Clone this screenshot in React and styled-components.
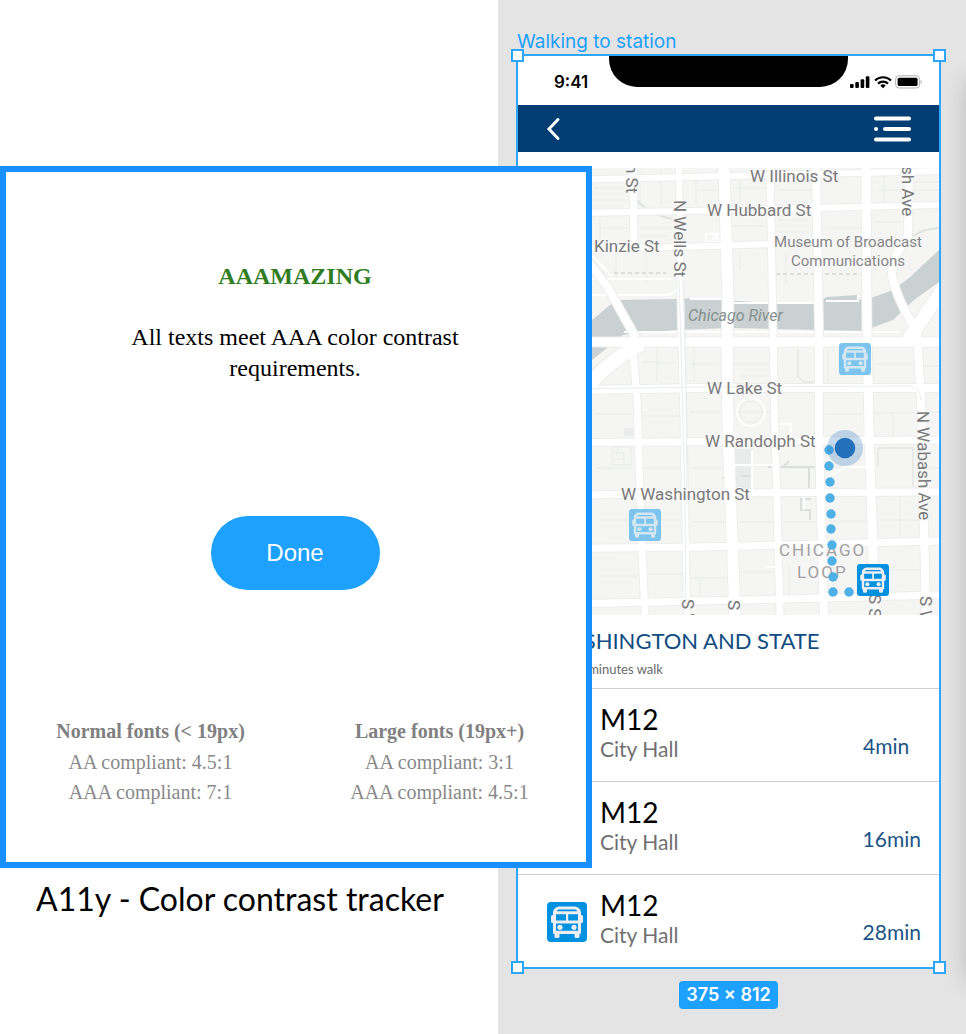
import React from "react";
import styled, { createGlobalStyle } from "styled-components";

const GlobalStyle = createGlobalStyle`
  *, *::before, *::after { box-sizing: border-box; }
  body { margin: 0; background: #fff; }
  h1, h2, h3, p, ul { margin: 0; padding: 0; }
  ul { list-style: none; }
`;

const serif = `"Liberation Serif", serif`;
const humanist = `Lato, sans-serif`;
const ui = `Inter, sans-serif`;

const Page = styled.div`
  display: grid;
  grid-template-columns: 498fr 468fr;
  min-height: 100vh;
`;

/* ---------- plugin side ---------- */

const PluginSide = styled.section`
  position: relative;
  z-index: 2;
  padding-top: 166px;
`;

const Panel = styled.div`
  display: flex;
  flex-direction: column;
  align-items: center;
  min-height: 702px;
  margin-right: -94px;
  padding: 89px 2px 55px 0;
  border: 6px solid #1890ff;
  background: #fff;
  font-family: ${serif};
`;

const Verdict = styled.h1`
  color: #2f7d1f;
  font-size: 24px;
  line-height: 30px;
`;

const Message = styled.p`
  max-width: 360px;
  margin-top: 31px;
  font-size: 24px;
  line-height: 31px;
  text-align: center;
  color: #000;
`;

const DoneButton = styled.button`
  margin-top: 132px;
  width: 169px;
  height: 74px;
  border: 0;
  border-radius: 37px;
  background: #1ea0fe;
  color: #fff;
  font: 24px "Liberation Sans", sans-serif;
`;

const Levels = styled.div`
  display: grid;
  grid-template-columns: 1fr 1fr;
  width: 100%;
  margin-top: auto;
`;

const Level = styled.div`
  color: #888;
  font-size: 20px;
  line-height: 30px;
  text-align: center;
`;

const LevelTitle = styled.h2`
  font-size: 20px;
  line-height: 31px;
  color: #808080;
`;

const Caption = styled.p`
  padding: 11px 0 0 36px;
  font-family: ${humanist};
  font-size: 32px;
  line-height: 40px;
  color: #000;
  white-space: nowrap;
`;

/* ---------- canvas side ---------- */

const Canvas = styled.section`
  position: relative;
  overflow: hidden;
  padding: 30px 25px 24px 18px;
  background: #e4e4e4;
`;

const NextFrameShadow = styled.div`
  position: absolute;
  left: 100%;
  top: 74px;
  bottom: 60px;
  width: 40px;
  box-shadow: 0 6px 24px rgba(0, 0, 0, 0.18);
`;

const FrameName = styled.h2`
  padding-left: 1px;
  font-family: ${ui};
  font-size: 19px;
  font-weight: 400;
  line-height: 24px;
  color: #1ea0fe;
`;

const Frame = styled.div`
  position: relative;
  border: 2px solid #2ea6fb;
  background: #fff;
`;

const Handle = styled.span`
  position: absolute;
  width: 13px;
  height: 13px;
  border: 2px solid #2ea6fb;
  background: #fff;
  ${(p) => p.$v}: -7px;
  ${(p) => p.$h}: -7px;
`;

const SizeBadge = styled.p`
  width: fit-content;
  margin: 12px auto 0;
  padding: 0 7px;
  border-radius: 4px;
  background: #1ea0fe;
  color: #fff;
  font-family: ${ui};
  font-size: 18px;
  font-weight: 600;
  line-height: 28px;
`;

const StatusBar = styled.div`
  position: relative;
  display: flex;
  align-items: center;
  justify-content: space-between;
  height: 49px;
  padding: 3px 17px 0 36px;
`;

const Notch = styled.div`
  position: absolute;
  top: 0;
  left: 50%;
  width: 239px;
  height: 31px;
  margin-left: -120px;
  border-radius: 0 0 28px 28px;
  background: #000;
`;

const Clock = styled.time`
  font-family: ${ui};
  font-size: 17px;
  font-weight: 600;
  line-height: 20px;
`;

const NavBar = styled.nav`
  display: flex;
  align-items: center;
  justify-content: space-between;
  height: 47px;
  padding: 0 27px;
  background: #023e73;
`;

const IconButton = styled.button`
  display: flex;
  padding: 0;
  border: 0;
  background: none;
`;

const MapArt = styled.svg`
  display: block;
  width: 100%;
  height: 447px;
  margin-top: 16px;
`;

const Stop = styled.header`
  height: 73px;
  padding: 11px 29px 0;
  font-family: ${humanist};
  white-space: nowrap;
`;

const StopName = styled.h3`
  font-size: 22px;
  font-weight: 400;
  line-height: 30px;
  color: #0f4c81;
`;

const StopWalk = styled.p`
  font-size: 13px;
  line-height: 26px;
  color: #6a6a6a;
`;

const Departure = styled.li`
  display: flex;
  align-items: center;
  height: 93px;
  padding: 2px 18px 0 29px;
  border-top: 1px solid #cfcfcf;
  font-family: ${humanist};
`;

const Route = styled.div`
  flex: 1;
  padding: 0 0 6px 13px;
`;

const RouteName = styled.p`
  font-size: 28px;
  line-height: 32px;
  color: #000;
`;

const RouteEnd = styled.p`
  font-size: 21px;
  line-height: 28px;
  color: #707070;
`;

const Wait = styled.p`
  align-self: flex-end;
  min-width: 58px;
  padding-bottom: 21px;
  font-size: 21px;
  line-height: 28px;
  color: #1c5585;
`;

/* ---------- drawings ---------- */

function BusTile({ size, x, y, faded }) {
  const tile = faded ? "#7cc4ee" : "#0091e1";
  const ink = faded ? "#d3e7f2" : "#ededf2";
  return (
    <svg x={x} y={y} width={size} height={size} viewBox="0 0 40 40" aria-hidden="true">
      <rect width="40" height="40" rx="4" fill={tile} />
      <path
        fill={ink}
        d="M13 4.500h14c4 0 7 2.600 7 6.500v2h.5a1.500 1.500 0 0 1 1.500 1.500v5a1.500 1.500 0 0 1-1.500 1.500H34v9.500a1.500 1.500 0 0 1-1.500 1.500v2.500a1.500 1.500 0 0 1-1.500 1.500h-2a1.500 1.500 0 0 1-1.500-1.500V32h-15v2.500A1.500 1.500 0 0 1 11 36H9a1.500 1.500 0 0 1-1.500-1.500V32A1.500 1.500 0 0 1 6 30.500V21h-.5A1.500 1.500 0 0 1 4 19.500v-5A1.500 1.500 0 0 1 5.500 13H6v-2c0-3.900 3-6.500 7-6.500z"
      />
      <path fill={tile} d="M12.500 7.500h15c1.400 0 2.300.7 2.700 1.700H9.800c.4-1 1.300-1.700 2.700-1.700z" />
      <path fill={tile} d="M9 12.300h10v6.200H9zM21.200 12.300H31v6.200h-9.800zM9 21.500h22v7.200H9z" />
      <circle cx="13" cy="25.300" r="2.600" fill={ink} />
      <circle cx="27" cy="25.300" r="2.600" fill={ink} />
    </svg>
  );
}

function StatusIcons() {
  return (
    <svg width="72" height="14" viewBox="0 0 72 14" aria-label="Signal, Wi-Fi and battery">
      <rect x="0" y="9" width="3.600" height="4" rx="1" />
      <rect x="5.300" y="7" width="3.600" height="6" rx="1" />
      <rect x="10.600" y="4.300" width="3.600" height="8.700" rx="1" />
      <rect x="15.800" y="1.200" width="3.600" height="11.800" rx="1" />
      <g fill="none" stroke="#000" strokeWidth="2.200">
        <path d="M25 5.500a11.500 11.500 0 0 1 16 0" />
        <path d="M28 8.600a7.200 7.200 0 0 1 10 0" />
      </g>
      <path d="M33 13.200l-2.700-2.700a4 4 0 0 1 5.400 0z" />
      <rect x="45.600" y=".8" width="24" height="12.200" rx="3.400" fill="none" stroke="#b2b2b2" />
      <rect x="47.600" y="2.700" width="20" height="8.400" rx="1.600" />
      <path d="M70.600 5v4a2.200 2.200 0 0 0 0-4z" fill="#b2b2b2" />
    </svg>
  );
}

const streets = [
  { d: "M518 181 L939 171", w: 6 },
  { d: "M518 214 L690 211 L939 205", w: 6 },
  { d: "M518 249 L680 247 L775 244", w: 6 },
  { d: "M633 168 L634 248", w: 7 },
  { d: "M632 340 L637 400 L642 550 L645 615", w: 7 },
  { d: "M679 168 L681 330 L684 440 L687 615", w: 6 },
  { d: "M724 168 L728 300 L727 345 L728 430 L735 615", w: 11 },
  { d: "M770 168 L773 330 L775 430 L780 615", w: 7 },
  { d: "M816 168 L819 330 L819 440 L824 615", w: 8 },
  { d: "M866 168 L867 330 L869 430 L875 615", w: 9 },
  { d: "M909 168 L908 236 Q892 256 892 275 Q896 298 917 332 L921 400 L926 615", w: 8 },
  { d: "M518 342 L939 342", w: 9 },
  { d: "M518 391 L700 388 L939 388", w: 8 },
  { d: "M518 443 L939 440", w: 7 },
  { d: "M518 496 L700 493 L939 492", w: 7 },
  { d: "M518 549 L700 547 L939 541", w: 7 },
  { d: "M518 605 L700 601 L939 595", w: 7 },
  { d: "M548 615 L546 342", w: 7 },
  { d: "M586 388 Q612 358 642 344", w: 14 },
  { d: "M586 258 L608 288 L636 338", w: 8 },
  { d: "M945 286 L908 340", w: 13 },
];

const details = [
  "M594 188H628M594 200H628M640 172V206M661 170V206M696 172V203M740 172V203M697 190H718M733 188H764M779 190H811M878 190H939M905 182H939M884 176V206",
  "M600 218V242M600 228H628M640 228H672M640 236H668M732 226H764M778 220H810M778 232H810M825 228H860M875 222H902M646 252V282M616 252V282M740 252V270M786 252V285",
  "M599 372L630 346M657 347V382M657 363H676M642 362H657M690 364H719M734 364H768M740 376H766M828 350V382M872 364H914M925 366H939M694 347V382",
  "M597 414H632M642 416H680M690 412H722M735 412H770M825 414H862M893 414V437M874 413H916M927 412H939",
  "M597 468H632M643 468H681M690 468H725M735 466H771M781 468H815M828 467H864M927 468H939M598 520H634M645 520H683M692 522H727M740 522H774M784 522H818M829 521H867M900 497V539M880 520H920",
  "M600 576H637M648 574H684M690 578H728M700 578V598M740 572H776M789 566V598M834 566V594M881 570H922",
];

const walkDots = [
  [829, 450], [829, 466], [830, 482], [830, 498], [831, 514], [831, 529],
  [832, 545], [832, 561], [833, 577], [833, 592], [849, 592],
];

const labels = [
  { x: 750, y: 182, t: "W Illinois St" },
  { x: 707, y: 216, t: "W Hubbard St" },
  { x: 594, y: 252, t: "Kinzie St" },
  { x: 707, y: 394, t: "W Lake St" },
  { x: 705, y: 447, t: "W Randolph St" },
  { x: 621, y: 500, t: "W Washington St" },
  { x: 626, y: 164, t: "n St", r: 90 },
  { x: 674, y: 200, t: "N Wells St", r: 90 },
  { x: 902, y: 166, t: "sh Ave", r: 90 },
  { x: 917, y: 411, t: "N Wabash Ave", r: 89 },
  { x: 682, y: 599, t: "S Wells St", r: 90 },
  { x: 728, y: 600, t: "S LaSalle St", r: 90 },
  { x: 869, y: 594, t: "S State St", r: 90 },
  { x: 920, y: 596, t: "S Wabash Ave", r: 90 },
];

function StreetMap() {
  return (
    <MapArt viewBox="518 168 421 447" preserveAspectRatio="xMidYMid slice" role="img" aria-label="Map of the Chicago Loop">
      <rect x="318" y="68" width="821" height="647" fill="#f5f5f4" />
      <g fill="none" stroke="#e9eceb">
        {details.map((d) => <path key={d} d={d} />)}
      </g>
      <path fill="#e9eceb" d="M734 449h18v40h-18zM624 428h9v8h-9z" />
      <g fill="none" stroke="#dcdedd" strokeWidth="2">
        <path d="M742 476h10M722 478h15M768 467h58M784 466l5-5M809 467v22M811 499h-10v11h9v10" />
        <path d="M878 467v-19h35v39M798 349v28l6 5h12" strokeWidth="1" />
        <path d="M600 273h66M776 274h84" strokeDasharray="4 3" />
      </g>
      <path
        fill="#cad1d2"
        d="M518 372L592 320 616 300 678 299 696 298 719 300 773 303 819 303 826 297 858 295 860 300 874 297 893 290 909 278 939 250V282L914 300 893 320 863 331 773 329 729 328 676 330 623 335 592 360 518 420z"
      />
      <path fill="none" stroke="#dfe4e3" strokeWidth="2" d="M634 195Q642 212 672 219M912 236L925 230 939 228" />
      <path fill="none" stroke="#fff" strokeWidth="2" d="M592 295H668L678 290M592 279H672M624 332H900M690 299H726L728 303H818M826 301H858V295M592 256L612 276M712 232l8 10M720 232l-8 8M706 234h16v8h-16z" />
      <g fill="none" stroke="#eceeed">
        {streets.map((s) => <path key={s.d} d={s.d} strokeWidth={s.w + 2} />)}
      </g>
      <g fill="none" stroke="#fff">
        {streets.map((s) => <path key={s.d} d={s.d} strokeWidth={s.w} />)}
      </g>
      <g fill="none" stroke="#e9eded">
        <path d="M679 280L681 345 682 388 685 500 686 615M683 280L685 345 686 388 687 500" />
        <path d="M518 390L700 387 910 386Q920 387 921 400" />
      </g>
      <g fill="none" stroke="#fff" strokeWidth="2">
        <circle cx="751" cy="412" r="14" />
        <circle cx="751" cy="412" r="11" stroke="#eceeed" strokeWidth="1" />
        <path d="M827 478L845 467H868M752 450V490M732 465H775M780 424h11v15h-12M765 567h12M804 497v13" />
      </g>
      <path fill="none" stroke="#e9eceb" d="M612 447h19v18h-19zM612 453h12v6h-12M618 447v6M624 459v6" />

      <g
        fontFamily="Roboto, sans-serif"
        fontSize="17"
        fill="#7a7a7a"
        stroke="#f8f8f8"
        strokeWidth="2"
        paintOrder="stroke"
      >
        {labels.map(({ x, y, t, r }) => (
          <text key={t} transform={`translate(${x} ${y}) rotate(${r || 0})`}>{t}</text>
        ))}
        <g fontSize="15" textAnchor="middle" fill="#858585">
          <text x="848" y="247">Museum of Broadcast</text>
          <text x="848" y="266">Communications</text>
        </g>
        <text x="688" y="321" fontSize="16" fontStyle="italic" fill="#84908f" stroke="none">Chicago River</text>
        <g fill="#a0a0a0" letterSpacing="2">
          <text x="779" y="556">CHICAGO</text>
          <text x="797" y="578">LOOP</text>
        </g>
      </g>

      <g fill="#4fb0e6">
        {walkDots.map(([x, y]) => <circle key={`${x}-${y}`} cx={x} cy={y} r="4.700" />)}
      </g>
      <circle cx="845" cy="448" r="18" fill="#2470bb" opacity=".26" />
      <circle cx="845" cy="448" r="10.300" fill="#2470bb" />
      <BusTile x="839" y="343" size="32" faded />
      <BusTile x="629" y="509" size="32" faded />
      <BusTile x="857" y="564" size="32" />
    </MapArt>
  );
}

const levels = [
  { title: "Normal fonts (< 19px)", lines: ["AA compliant: 4.5:1", "AAA compliant: 7:1"] },
  { title: "Large fonts (19px+)", lines: ["AA compliant: 3:1", "AAA compliant: 4.5:1"] },
];

const departures = ["4min", "16min", "28min"];

export default function App() {
  return (
    <Page>
      <GlobalStyle />
      <PluginSide>
        <Panel>
          <Verdict>AAAMAZING</Verdict>
          <Message>All texts meet AAA color contrast requirements.</Message>
          <DoneButton type="button">Done</DoneButton>
          <Levels>
            {levels.map((l) => (
              <Level key={l.title}>
                <LevelTitle>{l.title}</LevelTitle>
                {l.lines.map((line) => <p key={line}>{line}</p>)}
              </Level>
            ))}
          </Levels>
        </Panel>
        <Caption>A11y - Color contrast tracker</Caption>
      </PluginSide>

      <Canvas>
        <NextFrameShadow />
        <FrameName>Walking to station</FrameName>
        <Frame>
          <StatusBar>
            <Clock>9:41</Clock>
            <Notch />
            <StatusIcons />
          </StatusBar>
          <NavBar>
            <IconButton type="button" aria-label="Back">
              <svg width="17" height="24" viewBox="0 0 17 24" fill="none" stroke="#fff" strokeWidth="3" strokeLinecap="round" strokeLinejoin="miter">
                <path d="M13 2.500L4 12l9 9.500" />
              </svg>
            </IconButton>
            <IconButton type="button" aria-label="Menu">
              <svg width="39" height="28" viewBox="0 0 39 28" stroke="#fff" strokeWidth="4" strokeLinecap="round">
                <path d="M3 3.500H36M3 14H3.100M12 14H36M3 24.500H36" />
              </svg>
            </IconButton>
          </NavBar>
          <StreetMap />
          <Stop>
            <StopName>WASHINGTON AND STATE</StopName>
            <StopWalk>Only 5 minutes walk</StopWalk>
          </Stop>
          <ul>
            {departures.map((wait) => (
              <Departure key={wait}>
                <BusTile size={40} />
                <Route>
                  <RouteName>M12</RouteName>
                  <RouteEnd>City Hall</RouteEnd>
                </Route>
                <Wait>{wait}</Wait>
              </Departure>
            ))}
          </ul>
          <Handle $v="top" $h="left" />
          <Handle $v="top" $h="right" />
          <Handle $v="bottom" $h="left" />
          <Handle $v="bottom" $h="right" />
        </Frame>
        <SizeBadge>375 × 812</SizeBadge>
      </Canvas>
    </Page>
  );
}
